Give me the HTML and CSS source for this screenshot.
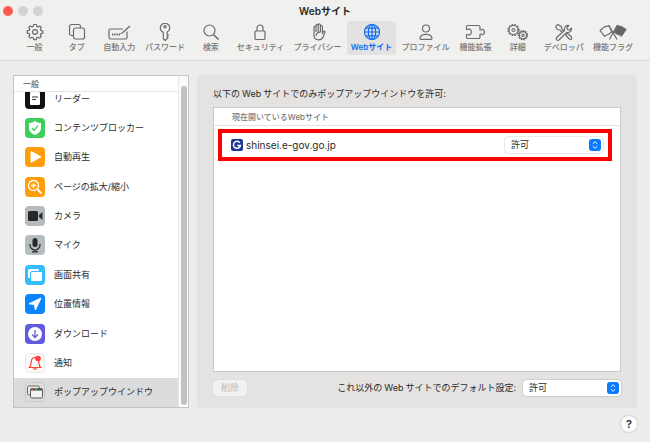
FILE: index.html
```html
<!DOCTYPE html>
<html lang="ja">
<head>
    <meta charset="UTF-8">
    <meta name="viewport" content="width=device-width, initial-scale=1.0">
    <title>Webサイト</title>
    <link rel="stylesheet" href="styles.css">
</head>
<body>
    <header class="titlebar">
        <div class="window-buttons">
            <button class="dot dot-close" aria-label="閉じる"></button>
            <button class="dot" aria-label="しまう" disabled></button>
            <button class="dot" aria-label="拡大" disabled></button>
        </div>
        <h1>Webサイト</h1>
    </header>

    <nav class="toolbar">
        <button class="tab">
            <svg viewBox="0 0 18 18"><path d="M7.7 1.5h2.6l.5 1.9 1.2.5 1.7-1 1.6 1.6-1 1.7.5 1.2 2 .5v2.3l-2 .5-.5 1.2 1 1.7-1.6 1.6-1.7-1-1.2.5-.5 2H7.7l-.5-2-1.2-.5-1.7 1-1.6-1.6 1-1.7-.5-1.2-2-.5V7.9l2-.5.5-1.2-1-1.7 1.6-1.6 1.7 1 1.2-.5z"/><circle cx="9" cy="9" r="2.4"/></svg>
            <span>一般</span>
        </button>
        <button class="tab">
            <svg viewBox="0 0 18 18"><path d="M5.5 12.5H3.5a2 2 0 0 1-2-2V3.500a2 2 0 0 1 2-2h7a2 2 0 0 1 2 2V5"/><rect x="5.500" y="5" width="11" height="11" rx="2"/></svg>
            <span>タブ</span>
        </button>
        <button class="tab">
            <svg class="wide" viewBox="0 0 24 18"><path d="M16 6H3.500A1.500 1.500 0 0 0 2 7.500v7A1.500 1.500 0 0 0 3.500 16h15a1.500 1.500 0 0 0 1.500-1.500V8.500"/><path d="M23 3l-7.500 6.800-2 1"/><path d="M5 11.500h8" stroke-width="1.800" stroke-dasharray="1.400 .8"/></svg>
            <span>自動入力</span>
        </button>
        <button class="tab">
            <svg viewBox="0 0 18 18"><path d="M7.300 9.300A4.700 4.700 0 1 1 11 9.200v1.600l1.300 1.200-1.300 1.300 1 1.200-2.800 3-1.900-1.700z"/><circle cx="9" cy="3.700" r="1.100"/></svg>
            <span>パスワード</span>
        </button>
        <button class="tab">
            <svg viewBox="0 0 18 18"><circle cx="7.500" cy="7.500" r="5.500"/><path d="M11.500 11.500l5 5" stroke-width="1.600"/></svg>
            <span>検索</span>
        </button>
        <button class="tab">
            <svg viewBox="0 0 18 18"><rect x="4" y="8" width="10" height="8.500" rx="1"/><path d="M6 8V5a3 3 0 0 1 6 0v3"/></svg>
            <span>セキュリティ</span>
        </button>
        <button class="tab">
            <svg viewBox="0 0 18 18"><path d="M5 9.500V4a1 1 0 0 1 2 0v4.500V2.500a1 1 0 0 1 2.200 0V8.500V2a1 1 0 0 1 2.200 0v6.500V3.500a1 1 0 0 1 2 0v7l.8-1.800c.6-1 2-.6 1.700.5l-1.700 4.600c-.8 2-2.200 3-4.500 3C6.500 16.800 5 15 5 12.500z"/><path d="M7 13c.2-2.600 2-3.800 4.500-3.800"/></svg>
            <span>プライバシー</span>
        </button>
        <button class="tab tab-active" aria-current="page">
            <svg viewBox="0 0 18 18"><circle cx="9" cy="9" r="7.500"/><ellipse cx="9" cy="9" rx="3.700" ry="7.500"/><path d="M9 1.500v15M1.500 9h15M2.500 5.200h13M2.500 12.800h13"/></svg>
            <span>Webサイト</span>
        </button>
        <button class="tab">
            <svg viewBox="0 0 18 18"><circle cx="9" cy="5.500" r="3.500"/><path d="M3 15.500c0-2.800 3-4.200 6-4.200s6 1.400 6 4.200c0 .6-.3.800-.8.800H3.800c-.5 0-.8-.2-.8-.8z"/></svg>
            <span>プロファイル</span>
        </button>
        <button class="tab">
            <svg class="wide" viewBox="0 0 24 18"><path d="M3.500 6.500V4A1.500 1.500 0 0 1 5 2.500h10.500A1.500 1.500 0 0 1 17 4v3h1.500c.6-1.200 3-.8 3 2s-2.400 3.200-3 2H17v3a1.500 1.500 0 0 1-1.500 1.500H5A1.500 1.500 0 0 1 3.500 14v-2.500h2c.6 1 2.800.7 2.800-2.500S6.100 5.500 5.500 6.500z"/></svg>
            <span>機能拡張</span>
        </button>
        <button class="tab">
            <svg class="wide" viewBox="0 0 24 18"><circle cx="7.500" cy="7" r="5.300" stroke-width="1.600" stroke-dasharray="1.700 1.100"/><circle cx="7.500" cy="7" r="4.500"/><circle cx="7.500" cy="7" r="1.500"/><circle cx="17" cy="12.200" r="4.400" stroke-width="1.500" stroke-dasharray="1.500 1"/><circle cx="17" cy="12.200" r="3.600"/><circle cx="17" cy="12.200" r="1.200"/></svg>
            <span>詳細</span>
        </button>
        <button class="tab">
            <svg class="wide" viewBox="0 0 24 18"><path d="M4.500 14.500l8-7c-.6-3 1.300-5.500 4.300-5L15 4.500l.4 2.100 2.100.4 2-1.800c.5 3-2 4.800-4.800 4.300l-7.700 7.500c-1.800 1-3.500-.6-2.500-2.500z"/><path d="M3.500 3.500L6 1.500l3.500 2.300.2 2 1.900 2M3.500 3.500l1.800 3 2.500.5 2 2M14 11l.3 2 3 3c1.500 1 3.200-.5 2.200-2l-3.200-3-1.800-.3"/></svg>
            <span>デベロッパ</span>
        </button>
        <button class="tab">
            <svg class="flags" viewBox="0 0 28 18"><path d="M10 2.500c-2.200 1.500-3 .3-5 1.800L1 7.500l4.500 5.800c2-1.800 3.500-.8 7.200-4.300zM10 2.500l8 14"/><path d="M18 2.500l-7.500 14"/><path class="solid" d="M18.500 2.500c2.200 1.500 3 .3 5 1.800l3.500 2.200-4.500 6.500c-2-1.800-3.500-.8-7.200-4z"/></svg>
            <span>機能フラグ</span>
        </button>
    </nav>

    <main class="content">
        <aside class="sidebar">
            <div class="sidebar-main">
                <h2>一般</h2>
                <div class="list-view">
                    <ul class="list">
                        <li><button class="item">
                            <svg viewBox="0 0 20 20"><rect width="20" height="20" rx="4" fill="#111"/><rect x="5" y="3" width="10" height="13" rx="1" fill="#fff"/><path d="M7 8h6M7 10.500h4" stroke="#333"/></svg>
                            リーダー
                        </button></li>
                        <li><button class="item">
                            <svg viewBox="0 0 20 20"><rect width="20" height="20" rx="4" fill="#3fcf5c"/><path d="M10 3c2 1.500 4 2 6 2v5c0 3.500-2.500 5.500-6 7-3.500-1.500-6-3.500-6-7V5c2 0 4-.5 6-2z" fill="#fff"/><path d="M7 10l2.200 2.500L13 7.500" fill="none" stroke="#35c653" stroke-width="1.200"/></svg>
                            コンテンツブロッカー
                        </button></li>
                        <li><button class="item">
                            <svg viewBox="0 0 20 20"><rect width="20" height="20" rx="4" fill="#ff9d0a"/><path d="M5.500 5c0-.8.6-1 1.200-.7l9 4.900c.7.400.7 1 0 1.400l-9 5c-.6.300-1.200 0-1.200-.7z" fill="#fff"/></svg>
                            自動再生
                        </button></li>
                        <li><button class="item">
                            <svg viewBox="0 0 20 20"><rect width="20" height="20" rx="4" fill="#ff9d0a"/><g fill="none" stroke="#fff" stroke-width="1.300"><circle cx="8.500" cy="8.500" r="5"/><path d="M12.200 12.200l4.300 4.300" stroke-width="1.800"/><path d="M6 8.500h5M8.500 6v5"/></g></svg>
                            ページの拡大/縮小
                        </button></li>
                        <li><button class="item">
                            <svg viewBox="0 0 20 20"><rect width="20" height="20" rx="4" fill="#b5bcc0"/><rect x="3" y="5" width="10" height="10" rx="1.500" fill="#26282a"/><path d="M14 9l3.500-3v8L14 11z" fill="#26282a"/></svg>
                            カメラ
                        </button></li>
                        <li><button class="item">
                            <svg viewBox="0 0 20 20"><rect width="20" height="20" rx="4" fill="#b5bcc0"/><rect x="7.500" y="3" width="5" height="9" rx="2.500" fill="#26282a"/><path d="M5 9v1a5 5 0 0 0 10 0V9M10 15v1.800M7 16.800h6" fill="none" stroke="#26282a" stroke-width="1.200"/></svg>
                            マイク
                        </button></li>
                        <li><button class="item">
                            <svg viewBox="0 0 20 20"><rect width="20" height="20" rx="4" fill="#35bdfb"/><rect x="3" y="4" width="11" height="9" rx="1.500" fill="#fff"/><rect x="5.500" y="6.500" width="12" height="10" rx="1.500" fill="#fff" stroke="#35bdfb"/></svg>
                            画面共有
                        </button></li>
                        <li><button class="item">
                            <svg viewBox="0 0 20 20"><rect width="20" height="20" rx="4" fill="#0a84ff"/><path d="M16 4L4 9.800l5.500.7.900 5.500z" fill="#fff" stroke="#fff" stroke-linejoin="round"/></svg>
                            位置情報
                        </button></li>
                        <li><button class="item">
                            <svg viewBox="0 0 20 20"><rect width="20" height="20" rx="4" fill="#5f5bdc"/><circle cx="10" cy="10" r="7" fill="#fff"/><path d="M10 6v7.500M7 10.500l3 3 3-3" fill="none" stroke="#5f5bdc" stroke-width="1.300"/></svg>
                            ダウンロード
                        </button></li>
                        <li><button class="item">
                            <svg viewBox="0 0 20 20"><rect x=".5" y=".5" width="19" height="19" rx="4" fill="#fafafa" stroke="#e8e8e8"/><path d="M4.500 14.500h11c-1.500-1.500-1.500-3-1.700-5.500-.2-2.500-1.600-4.500-3.800-4.500S6.400 6.500 6.200 9c-.2 2.500-.2 4-1.700 5.500zM8.500 15c.3 1.700 2.700 1.700 3 0" fill="none" stroke="#ff4035" stroke-width="1.200"/><circle cx="13" cy="5.500" r="2.800" fill="#ff4035"/></svg>
                            通知
                        </button></li>
                        <li><button class="item item-selected" aria-current="true">
                            <svg viewBox="0 0 20 20"><rect x=".5" y=".5" width="19" height="19" rx="4" fill="#dedede" stroke="#c8c8c8"/><rect x="2.500" y="4" width="12" height="9" rx="1.500" fill="#ececec" stroke="#666"/><rect x="5.500" y="7" width="12" height="9" rx="1.500" fill="#f4f4f4" stroke="#555"/><path d="M5.500 7.500h12" stroke="#444" stroke-width="2"/><path d="M6.500 7.300h2" stroke="#f04a3c" stroke-width="1.500"/><path d="M10 7.300h2" stroke="#43b649" stroke-width="1.500"/></svg>
                            ポップアップウインドウ
                        </button></li>
                    </ul>
                </div>
            </div>
            <div class="scrollbar"><div class="thumb"></div></div>
        </aside>

        <section class="panel">
            <h2>以下の<span class="latin">Web</span>サイトでのみポップアップウインドウを許可:</h2>
            <div class="sites">
                <h3>現在開いているWebサイト</h3>
                <div class="site">
                    <svg class="favicon" viewBox="0 0 12 12"><rect width="12" height="12" rx="2" fill="#1c3a94"/><path d="M8.800 3.800A3.500 3.500 0 1 0 9.400 6.500H6.200" fill="none" stroke="#fff" stroke-width="1.500"/></svg>
                    <label for="site-policy">shinsei.e-gov.go.jp</label>
                    <div class="popup">
                        <select id="site-policy"><option>許可</option></select>
                        <svg viewBox="0 0 12 12"><rect width="12" height="12" rx="3"/><path d="M3.800 4.800L6 2.700l2.200 2.100M3.800 7.200L6 9.300l2.200-2.100"/></svg>
                    </div>
                </div>
            </div>
            <div class="panel-footer">
                <button class="remove" disabled>削除</button>
                <label for="default-policy">これ以外の<span class="latin">Web</span>サイトでのデフォルト設定:</label>
                <div class="popup">
                    <select id="default-policy"><option>許可</option></select>
                    <svg viewBox="0 0 12 12"><rect width="12" height="12" rx="3"/><path d="M3.800 4.800L6 2.700l2.200 2.100M3.800 7.200L6 9.300l2.200-2.100"/></svg>
                </div>
            </div>
        </section>
    </main>

    <footer class="footer">
        <button class="help" aria-label="ヘルプ">?</button>
    </footer>
</body>
</html>
```
FILE: styles.css
```css
* {
    box-sizing: border-box;
}
body {
    margin: 0;
    min-height: 100vh;
    display: flex;
    flex-direction: column;
    background: #ececea;
    color: #2a2a2a;
    font-family: Inter, "Noto Sans CJK JP", sans-serif;
    font-size: 9px;
    line-height: 14px;
}
h1, h2, h3, ul {
    margin: 0;
    padding: 0;
    list-style: none;
}
button, select {
    font: inherit;
    color: inherit;
    border: none;
    padding: 0;
}
.latin {
    margin: 0 2px;
}

/* Title bar and toolbar */
.titlebar {
    display: grid;
    grid-template-columns: 1fr auto 1fr;
    align-items: center;
    height: 21px;
    padding: 0 3px;
    background: #f0f0ee;
}
.titlebar h1 {
    font-size: 10px;
    font-weight: 600;
}
.window-buttons {
    display: flex;
    gap: 5px;
}
.dot {
    width: 10px;
    height: 10px;
    border-radius: 50%;
    background: #d3d3d1;
}
.dot-close {
    background: #ff5b53;
}
.toolbar {
    display: flex;
    justify-content: space-between;
    height: 40px;
    padding: 0 13px 0 14px;
    background: #f0f0ee;
    border-bottom: 1px solid #d9d9d7;
}
.tab {
    display: flex;
    flex-direction: column;
    align-items: center;
    min-width: 41px;
    height: 34px;
    padding: 2px 4px 0;
    border-radius: 4px;
    background: none;
    color: #777;
    font-size: 8px;
    font-weight: 500;
    line-height: 12px;
    white-space: nowrap;
}
.tab svg {
    width: 18px;
    height: 18px;
    fill: none;
    stroke: #6b6b6b;
    stroke-width: 1.2;
    stroke-linejoin: round;
}
.tab .wide {
    width: 24px;
}
.tab .flags {
    width: 28px;
}
.tab .solid {
    fill: #666;
}
.tab-active {
    background: #e2e2e0;
    color: #0a6cf5;
    font-weight: 600;
}
.tab-active svg {
    stroke: #0a6cf5;
}

/* Content */
.content {
    flex: 1;
    display: flex;
    gap: 8px;
    padding: 14px 13px 0;
}
.sidebar {
    display: flex;
    width: 176px;
    border: 1px solid #c4c4c2;
    background: #fff;
}
.sidebar-main {
    flex: 1;
    display: flex;
    flex-direction: column;
}
.sidebar h2 {
    height: 16px;
    padding-left: 9px;
    border-bottom: 1px solid #e4e4e4;
    color: #666;
    font-size: 8px;
    font-weight: 500;
    line-height: 16px;
}
.list-view {
    flex: 1;
    display: flex;
    overflow: hidden;
}
.list {
    flex: 1;
    display: grid;
    grid-auto-rows: 1fr;
    margin-top: -8px;
}
.item {
    display: flex;
    align-items: center;
    gap: 9px;
    width: 100%;
    height: 100%;
    padding-left: 11px;
    background: none;
    text-align: left;
}
.item svg {
    width: 20px;
    height: 20px;
}
.item-selected {
    background: #dcdcdc;
}
.scrollbar {
    width: 10px;
    padding: 10px 2px 2px;
    border-left: 1px solid #e8e8e8;
    background: #fafafa;
}
.thumb {
    width: 6px;
    height: 100%;
    border-radius: 3px;
    background: #c1c1c1;
}
.panel {
    flex: 1;
    display: flex;
    flex-direction: column;
    padding: 12px 16px;
    border-radius: 4px;
    background: #e4e3e2;
}
.panel h2 {
    margin-bottom: 6px;
    font-size: 9px;
    font-weight: 400;
}
.sites {
    flex: 1;
    border: 1px solid #c9c9c7;
    background: #fff;
}
.sites h3 {
    height: 18px;
    padding-left: 18px;
    border-bottom: 1px solid #e4e4e4;
    color: #777;
    font-size: 8px;
    font-weight: 500;
    line-height: 18px;
}
.site {
    display: flex;
    align-items: center;
    gap: 3px;
    height: 32px;
    margin: 3px 8px 0 4px;
    padding: 0 5px 0 9px;
    border: 4px solid #f00;
    font-size: 10px;
}
.favicon {
    width: 12px;
    height: 12px;
}
.popup {
    position: relative;
    width: 98px;
    height: 16px;
    margin-left: auto;
}
.popup select {
    display: block;
    width: 100%;
    height: 100%;
    padding-left: 6px;
    appearance: none;
    border-radius: 4px;
    background: #fff;
    box-shadow: 0 0 2px rgba(0, 0, 0, 0.3);
    font-size: 9px;
}
.popup svg {
    position: absolute;
    top: 2px;
    right: 2px;
    width: 12px;
    height: 12px;
    fill: #0a7aff;
    pointer-events: none;
}
.popup path {
    fill: none;
    stroke: #fff;
}
.panel-footer {
    display: flex;
    align-items: center;
    padding-top: 8px;
}
.panel-footer label {
    margin-left: auto;
}
.panel-footer .popup {
    margin-left: 7px;
}
.remove {
    width: 34px;
    height: 16px;
    border-radius: 4px;
    background: #f1f1f0;
    box-shadow: 0 0 1px rgba(0, 0, 0, 0.2);
    color: #bbb;
}
.footer {
    display: flex;
    justify-content: flex-end;
    padding: 8px 13px 10px;
}
.help {
    width: 16px;
    height: 16px;
    border-radius: 50%;
    background: #fff;
    box-shadow: 0 0 2px rgba(0, 0, 0, 0.3);
    font-size: 11px;
    font-weight: 600;
}
```
